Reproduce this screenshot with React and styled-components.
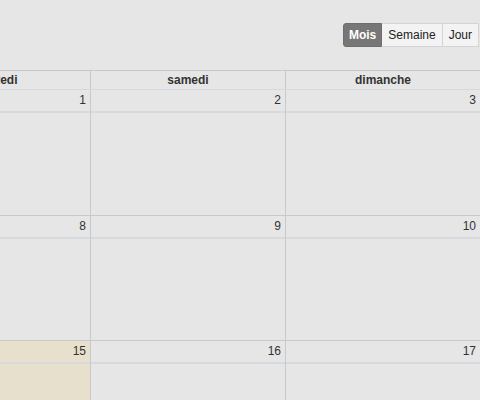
import styled, { createGlobalStyle } from 'styled-components';

const Global = createGlobalStyle`
body{
  margin: 0;
  background: #e6e6e6;
  font-family: "Liberation Sans", Arial, sans-serif;
  color: #333333;
}
`;

const days = ['vendredi', 'samedi', 'dimanche'];
const weeks = [[1, 2, 3], [8, 9, 10], [15, 16, 17]];
const today = 15;

export default function App(){
return(
<Page>
  <Global />
  <Toolbar>
    <ButtonGroup>
      <ViewButton $active>Mois</ViewButton>
      <ViewButton>Semaine</ViewButton>
      <ViewButton>Jour</ViewButton>
    </ButtonGroup>
  </Toolbar>
  <Viewport>
    <Grid>
      <HeadRow>
        {days.map((d) => (
          <HeadCell key={d}>{d}</HeadCell>
        ))}
      </HeadRow>
      {weeks.map((week, i) => (
        <Week key={i} $first={i === 0}>
          {week.map((n) => (
            <Day key={n} $today={n === today}>
              <DayNumber>{n}</DayNumber>
            </Day>
          ))}
        </Week>
      ))}
    </Grid>
  </Viewport>
</Page>
)
}

const Page = styled.div`
width: 480px;
height: 400px;
overflow: hidden;
`;

const Toolbar = styled.div`
display: flex;
justify-content: flex-end;
padding: 23px 1px 0 0;
height: 47px;
box-sizing: border-box;
`;

const ButtonGroup = styled.div`
display: flex;
height: 24px;
`;

const ViewButton = styled.div`
display: flex;
align-items: center;
padding: ${(p) => (p.$active ? '0 5px' : '0 6px')};
font-size: 12px;
font-weight: ${(p) => (p.$active ? 700 : 400)};
color: ${(p) => (p.$active ? '#ffffff' : '#222222')};
background: ${(p) => (p.$active ? '#777777' : '#f3f3f3')};
border: 1px solid ${(p) => (p.$active ? '#6e6e6e' : '#d4d4d4')};
border-left-width: ${(p) => (p.$active ? '1px' : '0')};
&:first-child{
  border-radius: 3px 0 0 3px;
}
`;

const Viewport = styled.div`
margin-top: 23px;
width: 480px;
overflow: hidden;
`;

const Grid = styled.div`
margin-left: -105px;
width: 585px;
`;

const HeadRow = styled.div`
display: grid;
grid-template-columns: repeat(3, 195px);
border-top: 1px solid #c9c9c9;
border-bottom: 1px solid #d5d8dc;
`;

const HeadCell = styled.div`
height: 18px;
line-height: 18px;
text-align: center;
font-size: 12px;
font-weight: 700;
& + &{
  border-left: 1px solid #c9c9c9;
}
`;

const Week = styled.div`
display: grid;
grid-template-columns: repeat(3, 195px);
height: 125px;
box-sizing: border-box;
border-top: ${(p) => (p.$first ? 'none' : '1px solid #c9c9c9')};
`;

const Day = styled.div`
background: ${(p) => (p.$today ? '#e7e0cd' : 'transparent')};
& + &{
  border-left: 1px solid #c9c9c9;
}
`;

const DayNumber = styled.div`
height: 21px;
line-height: 21px;
text-align: right;
padding-right: 4px;
font-size: 12px;
border-bottom: 2px solid #d6d9dd;
`;
